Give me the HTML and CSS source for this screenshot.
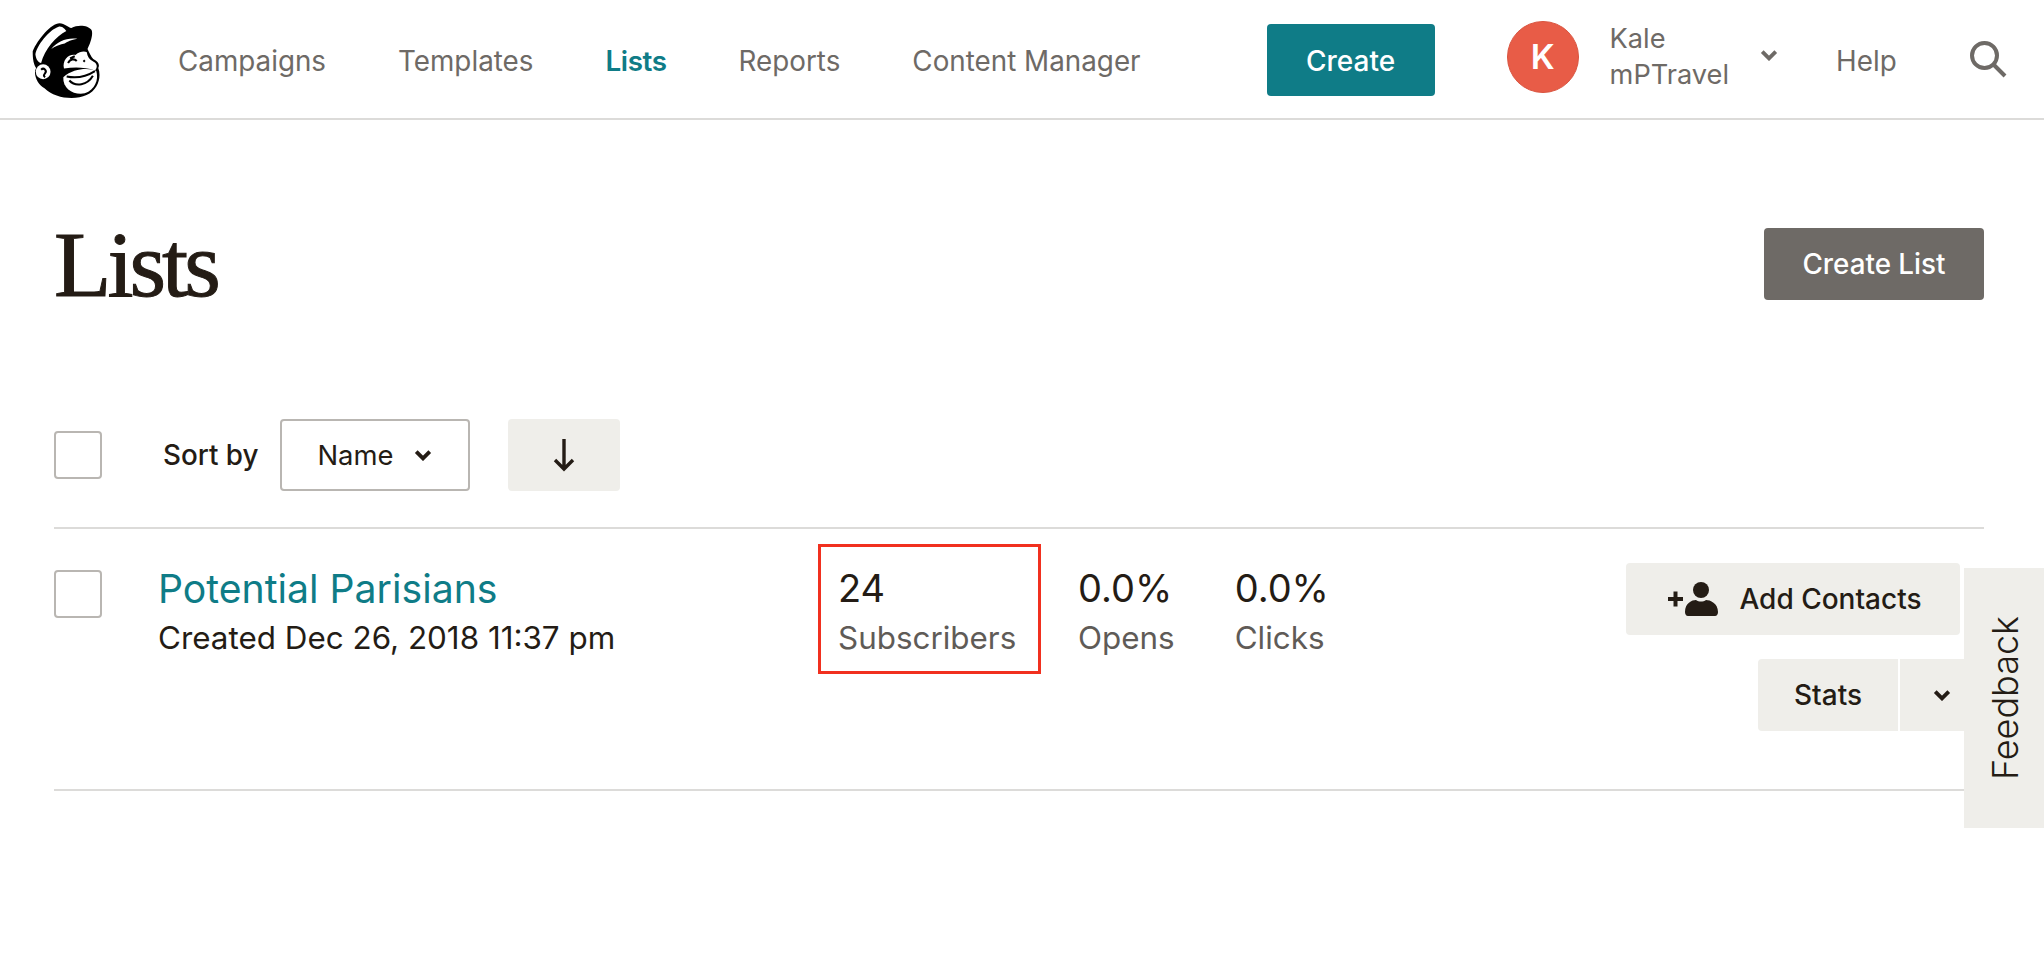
FILE: index.html

```html
<!DOCTYPE html>
<html lang="en">
<head>
  <meta charset="UTF-8">
  <title>Lists</title>
  <link rel="stylesheet" href="styles.css">
</head>
<body>

  <header class="topbar">
    <svg class="logo" viewBox="40 38 208 232">
      <path fill="#000" d="M125 42C140 42 150 55 160 56C180 45 210 48 220 62C226 75 215 105 208 118C214 130 218 140 225 148C240 155 245 165 240 175C250 200 240 240 205 255C170 272 110 265 80 235C60 225 45 195 55 175C45 160 45 135 45 125C60 90 100 42 125 42Z"/>
      <path fill="#fff" d="M122 52C135 50 140 60 145 65C115 80 80 120 70 160C62 160 55 150 53 135C55 110 95 60 122 52Z"/>
      <path fill="#fff" d="M100 118C120 96 145 84 178 88C158 92 150 96 140 102C128 104 112 110 100 118Z"/>
      <circle cx="76" cy="186" r="22" fill="#fff"/>
      <path fill="none" stroke="#000" stroke-width="6" d="M70 180C78 172 88 182 82 190C78 196 76 198 82 202"/>
      <path fill="#fff" d="M138 176C132 152 152 132 172 136C186 124 200 124 206 128C208 142 214 150 226 156C238 162 238 174 230 182C200 172 170 172 138 176Z"/>
      <path fill="#fff" d="M136 202C168 174 215 174 234 184C242 210 230 240 200 250C168 256 134 238 136 202Z"/>
      <path fill="none" stroke="#000" stroke-width="6" d="M150 160C156 148 168 146 176 154M156 146L170 140M196 152L200 156"/>
      <path fill="none" stroke="#000" stroke-width="6" d="M146 200C175 206 205 200 230 184M154 212C172 232 208 226 224 198"/>
    </svg>

    <nav class="main-nav">
      <a href="#">Campaigns</a>
      <a href="#">Templates</a>
      <a href="#" class="active">Lists</a>
      <a href="#">Reports</a>
      <a href="#">Content Manager</a>
    </nav>

    <a href="#" class="btn-create">Create</a>

    <div class="account">
      <div class="avatar">K</div>
      <div class="account-name">Kale<br>mPTravel</div>
      <svg class="chevron chevron-nav" viewBox="0 0 16 10"><path d="M2 2l6 6 6-6"/></svg>
    </div>

    <a href="#" class="help">Help</a>

    <svg class="search" viewBox="0 0 38 38">
      <circle cx="15.5" cy="15.5" r="12.5"/>
      <path d="M24.5 24.5L36 36"/>
    </svg>
  </header>

  <main class="content">
    <div class="title-row">
      <h1>Lists</h1>
      <a href="#" class="btn-dark">Create List</a>
    </div>

    <div class="sort-row">
      <span class="checkbox"></span>
      <span class="sort-label">Sort by</span>
      <div class="select">
        Name
        <svg class="chevron" viewBox="0 0 16 10"><path d="M2 2l6 6 6-6"/></svg>
      </div>
      <div class="btn-arrow">
        <svg viewBox="0 0 22 34"><path d="M11 1v30M2 22l9 9 9-9"/></svg>
      </div>
    </div>

    <div class="list-row">
      <span class="checkbox"></span>
      <div class="list-info">
        <a href="#" class="list-name">Potential Parisians</a>
        <div class="list-date">Created Dec 26, 2018 11:37 pm</div>
      </div>

      <div class="stats">
        <div class="stat stat-marked">
          <div class="stat-value">24</div>
          <div class="stat-label">Subscribers</div>
        </div>
        <div class="stat">
          <div class="stat-value">0.0%</div>
          <div class="stat-label">Opens</div>
        </div>
        <div class="stat">
          <div class="stat-value">0.0%</div>
          <div class="stat-label">Clicks</div>
        </div>
      </div>

      <div class="actions">
        <a href="#" class="btn-light btn-add">
          <svg class="add-icon" viewBox="0 0 50 34">
            <path d="M0 15h15v4H0zM5.500 9.500h4v15h-4z"/>
            <circle cx="33" cy="8" r="8"/>
            <path d="M17 30c0-9 7-12 11-12 3 2 7 2 10 0 4 0 12 3 12 12 0 2-1 4-3 4H20c-2 0-3-2-3-4z"/>
          </svg>
          Add Contacts
        </a>
        <div class="split">
          <a href="#" class="btn-light btn-stats">Stats</a>
          <a href="#" class="btn-light btn-more">
            <svg class="chevron" viewBox="0 0 16 10"><path d="M2 2l6 6 6-6"/></svg>
          </a>
        </div>
      </div>
    </div>
  </main>

  <div class="feedback"><span>Feedback</span></div>

</body>
</html>
```

FILE: styles.css

```css
* {
  box-sizing: border-box;
}

body {
  margin: 0;
  background-color: #ffffff;
  font-family: Inter, "Liberation Sans", sans-serif;
  color: #241c15;
  overflow: hidden;
}

a {
  text-decoration: none;
  color: inherit;
}

/* Top bar */
.topbar {
  display: flex;
  align-items: center;
  height: 120px;
  padding-left: 31px;
  border-bottom: 2px solid #dcdbd9;
}

.logo {
  width: 70px;
  height: 78px;
  margin-top: 3px;
  flex: none;
}

.main-nav {
  display: flex;
  gap: 72px;
  margin-top: 3px;
  margin-left: 77px;
  font-size: 27.8px;
  color: #6e6a66;
}

.main-nav .active {
  color: #0f7c87;
  font-weight: 600;
  letter-spacing: -0.4px;
}

.btn-create {
  display: flex;
  align-items: center;
  justify-content: center;
  width: 168px;
  height: 72px;
  margin-top: 1px;
  margin-left: 126px;
  padding-top: 2px;
  background-color: #0f7c87;
  border-radius: 4px;
  color: #ffffff;
  font-size: 28px;
  font-weight: 500;
}

.account {
  display: flex;
  align-items: center;
  margin-top: -5px;
  margin-left: 72px;
  color: #6e6a66;
  font-size: 27.2px;
}

.avatar {
  display: flex;
  align-items: center;
  justify-content: center;
  width: 72px;
  height: 72px;
  background-color: #e85c47;
  border: 1px solid #d9543f;
  border-radius: 50%;
  color: #ffffff;
  font-size: 34px;
  font-weight: 600;
}

.account-name {
  margin-left: 31px;
  line-height: 36px;
}

.chevron {
  width: 18px;
  height: 12px;
  fill: none;
  stroke: #241c15;
  stroke-width: 3.4;
}

.chevron-nav {
  stroke: #6e6a66;
  margin: -3px 0 0 31px;
}

.help {
  margin-top: 3px;
  margin-left: 58px;
  font-size: 27.8px;
  color: #6e6a66;
}

.search {
  width: 38px;
  height: 38px;
  margin-left: 72px;
  fill: none;
  stroke: #6e6a66;
  stroke-width: 4;
}

/* Page */
.content {
  padding: 0 60px 0 54px;
}

.title-row {
  display: flex;
  align-items: center;
  justify-content: space-between;
  margin-top: 108px;
}

h1 {
  margin: 0;
  font-family: "Liberation Serif", serif;
  font-size: 94px;
  font-weight: 400;
  line-height: 72px;
  letter-spacing: -4px;
  -webkit-text-stroke: 1px #241c15;
}

.btn-dark {
  display: flex;
  align-items: center;
  justify-content: center;
  width: 220px;
  height: 72px;
  background-color: #6e6a66;
  border-radius: 4px;
  color: #ffffff;
  font-size: 27.8px;
  font-weight: 500;
}

.sort-row {
  display: flex;
  align-items: center;
  height: 109px;
  margin-top: 120px;
  padding-bottom: 37px;
  border-bottom: 2px solid #dcdbd9;
}

.checkbox {
  display: block;
  flex: none;
  width: 48px;
  height: 48px;
  background-color: #ffffff;
  border: 2px solid #b9b6b2;
  border-radius: 4px;
}

.sort-label {
  margin-left: 61px;
  font-size: 27.8px;
  font-weight: 500;
}

.select {
  display: flex;
  align-items: center;
  justify-content: space-between;
  width: 190px;
  height: 72px;
  margin-left: 22px;
  padding: 0 36px 0 35px;
  border: 2px solid #b9b6b2;
  border-radius: 4px;
  font-size: 27.4px;
}

.btn-arrow {
  display: flex;
  align-items: center;
  justify-content: center;
  width: 112px;
  height: 72px;
  margin-left: 38px;
  background-color: #efeeea;
  border-radius: 4px;
}

.btn-arrow svg {
  width: 22px;
  height: 34px;
  fill: none;
  stroke: #241c15;
  stroke-width: 3.400;
}

/* List row */
.list-row {
  display: flex;
  align-items: flex-start;
  height: 262px;
  padding-top: 15px;
  border-bottom: 2px solid #dcdbd9;
}

.list-row > .checkbox {
  margin-top: 26px;
}

.list-info {
  width: 660px;
  margin-left: 56px;
  padding-top: 20px;
}

.list-name {
  display: block;
  color: #0f7c87;
  font-size: 39.2px;
  line-height: 50px;
}

.list-date {
  font-size: 31.400px;
  line-height: 49px;
}

.stats {
  display: flex;
}

.stat {
  padding-top: 19px;
  margin-right: 60px;
}

.stat-marked {
  width: 223px;
  height: 130px;
  margin-right: 37px;
  padding-top: 16px;
  padding-left: 17px;
  border: 3px solid #f1301f;
}

.stat-value {
  font-size: 38px;
  line-height: 50px;
}

.stat-label {
  color: #5f5b57;
  font-size: 31.400px;
  line-height: 50px;
}

.actions {
  display: flex;
  flex-direction: column;
  align-items: flex-end;
  gap: 24px;
  margin-left: auto;
  padding-top: 19px;
}

.btn-light {
  display: flex;
  align-items: center;
  justify-content: center;
  height: 72px;
  background-color: #efeeea;
  font-size: 28px;
  font-weight: 500;
}

.btn-add {
  width: 334px;
  margin-right: 24px;
  padding-left: 4px;
  border-radius: 4px;
}

.add-icon {
  width: 50px;
  height: 34px;
  margin-right: 21px;
  fill: #241c15;
}

.split {
  display: flex;
  gap: 2px;
}

.btn-stats {
  width: 140px;
  border-radius: 4px 0 0 4px;
}

.btn-more {
  width: 84px;
  border-radius: 0 4px 4px 0;
}

/* Feedback tab stuck to the window edge */
.feedback {
  position: fixed;
  top: 568px;
  right: 0;
  display: flex;
  align-items: center;
  justify-content: center;
  width: 80px;
  height: 260px;
  padding-left: 3px;
  background-color: #efeeea;
}

.feedback span {
  transform: rotate(-90deg);
  font-size: 36px;
  font-weight: 300;
}
```
